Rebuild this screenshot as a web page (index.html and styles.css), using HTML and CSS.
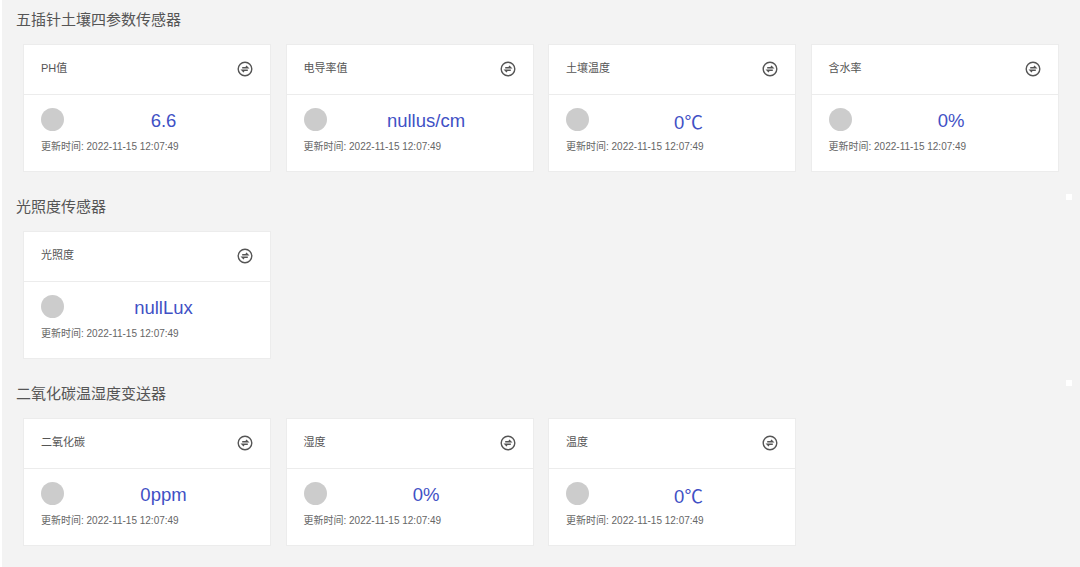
FILE: index.html
```html
<!DOCTYPE html>
<html lang="zh">
<head>
<meta charset="utf-8">
<title>传感器</title>
<link rel="stylesheet" href="styles.css">
</head>
<body>
<main class="page">
  <section class="group">
    <h2 class="group-title">五插针土壤四参数传感器</h2>
    <div class="cards">
      <article class="card"><header class="card-head"><span class="card-name">PH值</span><svg class="swap" viewBox="0 0 16 16"><circle cx="8" cy="8" r="6.8"/><path d="M5.2 6.7H10.8L9 4.9M10.8 9.3H5.2L7 11.1"/></svg></header><div class="card-body"><div class="reading"><span class="dot"></span><span class="value">6.6</span></div><p class="time">更新时间: 2022-11-15 12:07:49</p></div></article>
      <article class="card"><header class="card-head"><span class="card-name">电导率值</span><svg class="swap" viewBox="0 0 16 16"><circle cx="8" cy="8" r="6.8"/><path d="M5.2 6.7H10.8L9 4.9M10.8 9.3H5.2L7 11.1"/></svg></header><div class="card-body"><div class="reading"><span class="dot"></span><span class="value">nullus/cm</span></div><p class="time">更新时间: 2022-11-15 12:07:49</p></div></article>
      <article class="card"><header class="card-head"><span class="card-name">土壤温度</span><svg class="swap" viewBox="0 0 16 16"><circle cx="8" cy="8" r="6.8"/><path d="M5.2 6.7H10.8L9 4.9M10.8 9.3H5.2L7 11.1"/></svg></header><div class="card-body"><div class="reading"><span class="dot"></span><span class="value">0℃</span></div><p class="time">更新时间: 2022-11-15 12:07:49</p></div></article>
      <article class="card"><header class="card-head"><span class="card-name">含水率</span><svg class="swap" viewBox="0 0 16 16"><circle cx="8" cy="8" r="6.8"/><path d="M5.2 6.7H10.8L9 4.9M10.8 9.3H5.2L7 11.1"/></svg></header><div class="card-body"><div class="reading"><span class="dot"></span><span class="value">0%</span></div><p class="time">更新时间: 2022-11-15 12:07:49</p></div></article>
    </div>
  </section>
  <section class="group">
    <h2 class="group-title">光照度传感器</h2>
    <div class="cards">
      <article class="card"><header class="card-head"><span class="card-name">光照度</span><svg class="swap" viewBox="0 0 16 16"><circle cx="8" cy="8" r="6.8"/><path d="M5.2 6.7H10.8L9 4.9M10.8 9.3H5.2L7 11.1"/></svg></header><div class="card-body"><div class="reading"><span class="dot"></span><span class="value">nullLux</span></div><p class="time">更新时间: 2022-11-15 12:07:49</p></div></article>
    </div>
  </section>
  <section class="group">
    <h2 class="group-title">二氧化碳温湿度变送器</h2>
    <div class="cards">
      <article class="card"><header class="card-head"><span class="card-name">二氧化碳</span><svg class="swap" viewBox="0 0 16 16"><circle cx="8" cy="8" r="6.8"/><path d="M5.2 6.7H10.8L9 4.9M10.8 9.3H5.2L7 11.1"/></svg></header><div class="card-body"><div class="reading"><span class="dot"></span><span class="value">0ppm</span></div><p class="time">更新时间: 2022-11-15 12:07:49</p></div></article>
      <article class="card"><header class="card-head"><span class="card-name">湿度</span><svg class="swap" viewBox="0 0 16 16"><circle cx="8" cy="8" r="6.8"/><path d="M5.2 6.7H10.8L9 4.9M10.8 9.3H5.2L7 11.1"/></svg></header><div class="card-body"><div class="reading"><span class="dot"></span><span class="value">0%</span></div><p class="time">更新时间: 2022-11-15 12:07:49</p></div></article>
      <article class="card"><header class="card-head"><span class="card-name">温度</span><svg class="swap" viewBox="0 0 16 16"><circle cx="8" cy="8" r="6.8"/><path d="M5.2 6.7H10.8L9 4.9M10.8 9.3H5.2L7 11.1"/></svg></header><div class="card-body"><div class="reading"><span class="dot"></span><span class="value">0℃</span></div><p class="time">更新时间: 2022-11-15 12:07:49</p></div></article>
    </div>
  </section>
  <span class="speck speck-a"></span>
  <span class="speck speck-b"></span>
</main>
</body>
</html>
```
FILE: styles.css
```css
* { box-sizing: border-box; }
html, body { margin: 0; height: 100%; overflow: hidden; }
body {
  background: #fff;
  font-family: "Liberation Sans", "Noto Sans CJK SC", sans-serif;
  color: #555;
}
.page {
  position: relative;
  height: 567px;
  margin-left: 2px;
  padding: 8px 0 0 14px;
  background: #f3f3f3;
}
.group { height: 187px; }
.group-title {
  margin: 0;
  height: 24px;
  font-size: 15px;
  line-height: 24px;
  font-weight: 400;
  color: #555;
}
.cards {
  display: grid;
  grid-template-columns: repeat(4, 248px);
  column-gap: 14.5px;
  margin: 11.5px 0 0 7px;
}
.card {
  height: 128.5px;
  background: #fff;
  border: 1px solid #ececec;
}
.card-head {
  display: flex;
  align-items: center;
  justify-content: space-between;
  height: 50px;
  padding: 0 17px 1px;
  border-bottom: 1px solid #ececec;
}
.card-name { margin-bottom: 3px; font-size: 11px; color: #555; }
.swap {
  width: 16px;
  height: 16px;
  fill: none;
  stroke: #555;
  stroke-width: 1.4;
}
.card-body { padding: 13px 17px 0; }
.reading { display: flex; align-items: center; height: 24px; }
.dot {
  flex: none;
  width: 23px;
  height: 23px;
  border-radius: 50%;
  background: #ccc;
}
.value {
  flex: 1;
  margin: 2px 0 0 10px;
  text-align: center;
  font-size: 18.5px;
  color: #3f51c5;
}
.time { margin: 8px 0 0; font-size: 10px; line-height: 14px; color: #666; }
.speck {
  position: absolute;
  left: 1064px;
  width: 6px;
  height: 6px;
  background: #fff;
}
.speck-a { top: 194px; }
.speck-b { top: 380px; }
```
